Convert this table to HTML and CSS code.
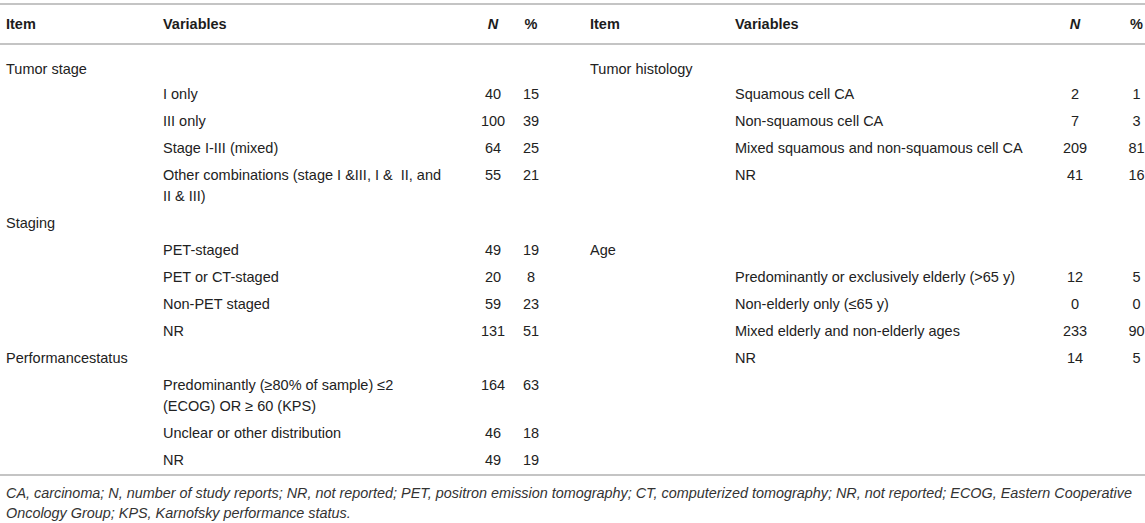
FILE: index.html
```html
<!DOCTYPE html>
<html>
<head>
<meta charset="utf-8">
<link rel="stylesheet" href="styles.css">
</head>
<body>
<div class="wrap">
<table class="tbl">
  <colgroup>
    <col class="c1"><col class="c2"><col class="c3"><col class="c4">
    <col class="c5"><col class="c6"><col class="c7"><col class="c8">
  </colgroup>
  <thead>
    <tr>
      <th class="it">Item</th><th class="va">Variables</th><th class="n"><i>N</i></th><th class="p">%</th>
      <th class="it2">Item</th><th class="va">Variables</th><th class="n"><i>N</i></th><th class="p2">%</th>
    </tr>
  </thead>
  <tbody>
    <tr class="first">
      <td class="it">Tumor stage</td><td></td><td></td><td></td>
      <td class="it2">Tumor histology</td><td></td><td></td><td></td>
    </tr>
    <tr>
      <td></td><td class="va">I only</td><td class="n">40</td><td class="p">15</td>
      <td></td><td class="va">Squamous cell CA</td><td class="n">2</td><td class="p2">1</td>
    </tr>
    <tr>
      <td></td><td class="va">III only</td><td class="n">100</td><td class="p">39</td>
      <td></td><td class="va">Non-squamous cell CA</td><td class="n">7</td><td class="p2">3</td>
    </tr>
    <tr>
      <td></td><td class="va">Stage I-III (mixed)</td><td class="n">64</td><td class="p">25</td>
      <td></td><td class="va">Mixed squamous and non-squamous cell CA</td><td class="n">209</td><td class="p2">81</td>
    </tr>
    <tr>
      <td></td><td class="va">Other combinations (stage I &amp;III, I &amp;&nbsp; II, and II &amp; III)</td><td class="n">55</td><td class="p">21</td>
      <td></td><td class="va">NR</td><td class="n">41</td><td class="p2">16</td>
    </tr>
    <tr>
      <td class="it">Staging</td><td></td><td></td><td></td>
      <td></td><td></td><td></td><td></td>
    </tr>
    <tr>
      <td></td><td class="va">PET-staged</td><td class="n">49</td><td class="p">19</td>
      <td class="it2">Age</td><td></td><td></td><td></td>
    </tr>
    <tr>
      <td></td><td class="va">PET or CT-staged</td><td class="n">20</td><td class="p">8</td>
      <td></td><td class="va">Predominantly or exclusively elderly (&gt;65 y)</td><td class="n">12</td><td class="p2">5</td>
    </tr>
    <tr>
      <td></td><td class="va">Non-PET staged</td><td class="n">59</td><td class="p">23</td>
      <td></td><td class="va">Non-elderly only (≤65 y)</td><td class="n">0</td><td class="p2">0</td>
    </tr>
    <tr>
      <td></td><td class="va">NR</td><td class="n">131</td><td class="p">51</td>
      <td></td><td class="va">Mixed elderly and non-elderly ages</td><td class="n">233</td><td class="p2">90</td>
    </tr>
    <tr>
      <td class="it">Performancestatus</td><td></td><td></td><td></td>
      <td></td><td class="va">NR</td><td class="n">14</td><td class="p2">5</td>
    </tr>
    <tr>
      <td></td><td class="va">Predominantly (≥80% of sample) ≤2 (ECOG) OR ≥ 60 (KPS)</td><td class="n">164</td><td class="p">63</td>
      <td></td><td></td><td></td><td></td>
    </tr>
    <tr>
      <td></td><td class="va">Unclear or other distribution</td><td class="n">46</td><td class="p">18</td>
      <td></td><td></td><td></td><td></td>
    </tr>
    <tr class="last">
      <td></td><td class="va">NR</td><td class="n">49</td><td class="p">19</td>
      <td></td><td></td><td></td><td></td>
    </tr>
  </tbody>
</table>
<p class="caption"><i>CA, carcinoma; N, number of study reports; NR, not reported; PET, positron emission tomography; CT, computerized tomography; NR, not reported; ECOG, Eastern Cooperative Oncology Group; KPS, Karnofsky performance status.</i></p>
</div>
</body>
</html>
```
FILE: styles.css
```css
html, body {
  margin: 0;
  padding: 0;
  background: #ffffff;
}
.wrap {
  width: 1145px;
  padding-top: 3px;
  font-family: "Liberation Sans", Arial, sans-serif;
  color: #222222;
}
.tbl {
  width: 1145px;
  border-collapse: collapse;
  table-layout: fixed;
  font-size: 14.5px;
  border-top: 2px solid #c4c4c4;
  border-bottom: 2px solid #c4c4c4;
}
.c1 { width: 157px; }
.c2 { width: 313px; }
.c3 { width: 46px; }
.c4 { width: 30px; }
.c5 { width: 183px; }
.c6 { width: 323px; }
.c7 { width: 46px; }
.c8 { width: 47px; }
.tbl th {
  font-weight: bold;
  text-align: left;
  height: 38px;
  padding: 0;
  vertical-align: middle;
  border-bottom: 2px solid #c4c4c4;
  color: #1c1c1c;
}
.tbl td {
  padding: 3px 0;
  line-height: 21px;
  vertical-align: top;
}
.tbl tr.first td { padding-top: 14px; padding-bottom: 1px; }
.tbl tr.last td { padding-bottom: 3px; }
.it { padding-left: 6px !important; }
.it2 { padding-left: 44px !important; }
.va { padding-left: 6px !important; padding-right: 22px !important; }
.n { text-align: center !important; }
.p { text-align: center !important; }
.p2 { text-align: center !important; padding-left: 30px !important; white-space: nowrap; }
.caption {
  margin: 0;
  padding: 7px 6px 0 6px;
  font-size: 14.4px;
  line-height: 20px;
  color: #333333;
}
```
